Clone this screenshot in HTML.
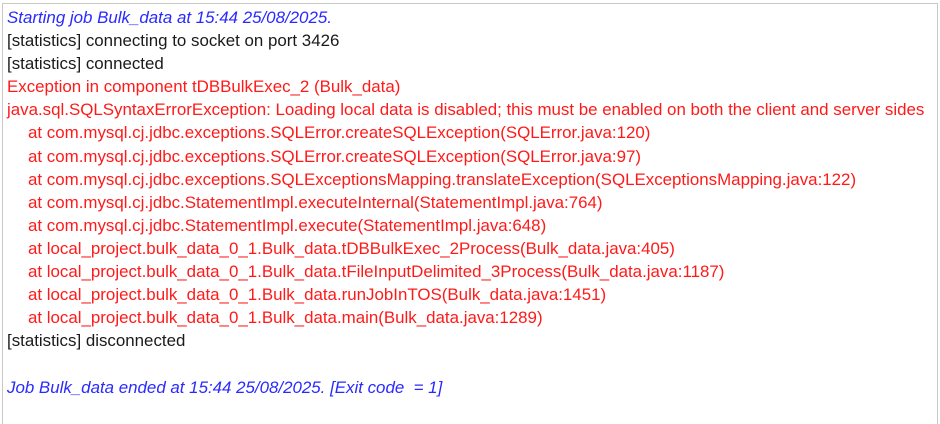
<!DOCTYPE html>
<html><head><style>
html,body{margin:0;padding:0;background:#fff;width:940px;height:408px;overflow:hidden}
.box{position:absolute;left:2px;top:3px;width:934px;height:420px;border:1px solid #c8c8c8;border-bottom:none}
.t{position:absolute;left:7px;top:6px;font-family:"Liberation Sans",sans-serif;font-size:16.9px;line-height:23.1px;white-space:pre;color:#1a1a1a}
.b{color:#2a2aff;font-style:italic}
.r{color:#ff1a1a}
.i{padding-left:21px}
</style></head><body>
<div class="box"></div>
<div class="t"><div class="b">Starting job Bulk_data at 15:44 25/08/2025.</div><div>[statistics] connecting to socket on port 3426</div><div>[statistics] connected</div><div class="r">Exception in component tDBBulkExec_2 (Bulk_data)</div><div class="r">java.sql.SQLSyntaxErrorException: Loading local data is disabled; this must be enabled on both the client and server sides</div><div class="r i">at com.mysql.cj.jdbc.exceptions.SQLError.createSQLException(SQLError.java:120)</div><div class="r i">at com.mysql.cj.jdbc.exceptions.SQLError.createSQLException(SQLError.java:97)</div><div class="r i">at com.mysql.cj.jdbc.exceptions.SQLExceptionsMapping.translateException(SQLExceptionsMapping.java:122)</div><div class="r i">at com.mysql.cj.jdbc.StatementImpl.executeInternal(StatementImpl.java:764)</div><div class="r i">at com.mysql.cj.jdbc.StatementImpl.execute(StatementImpl.java:648)</div><div class="r i">at local_project.bulk_data_0_1.Bulk_data.tDBBulkExec_2Process(Bulk_data.java:405)</div><div class="r i">at local_project.bulk_data_0_1.Bulk_data.tFileInputDelimited_3Process(Bulk_data.java:1187)</div><div class="r i">at local_project.bulk_data_0_1.Bulk_data.runJobInTOS(Bulk_data.java:1451)</div><div class="r i">at local_project.bulk_data_0_1.Bulk_data.main(Bulk_data.java:1289)</div><div>[statistics] disconnected</div><div> </div><div class="b">Job Bulk_data ended at 15:44 25/08/2025. [Exit code  = 1]</div></div>
</body></html>
